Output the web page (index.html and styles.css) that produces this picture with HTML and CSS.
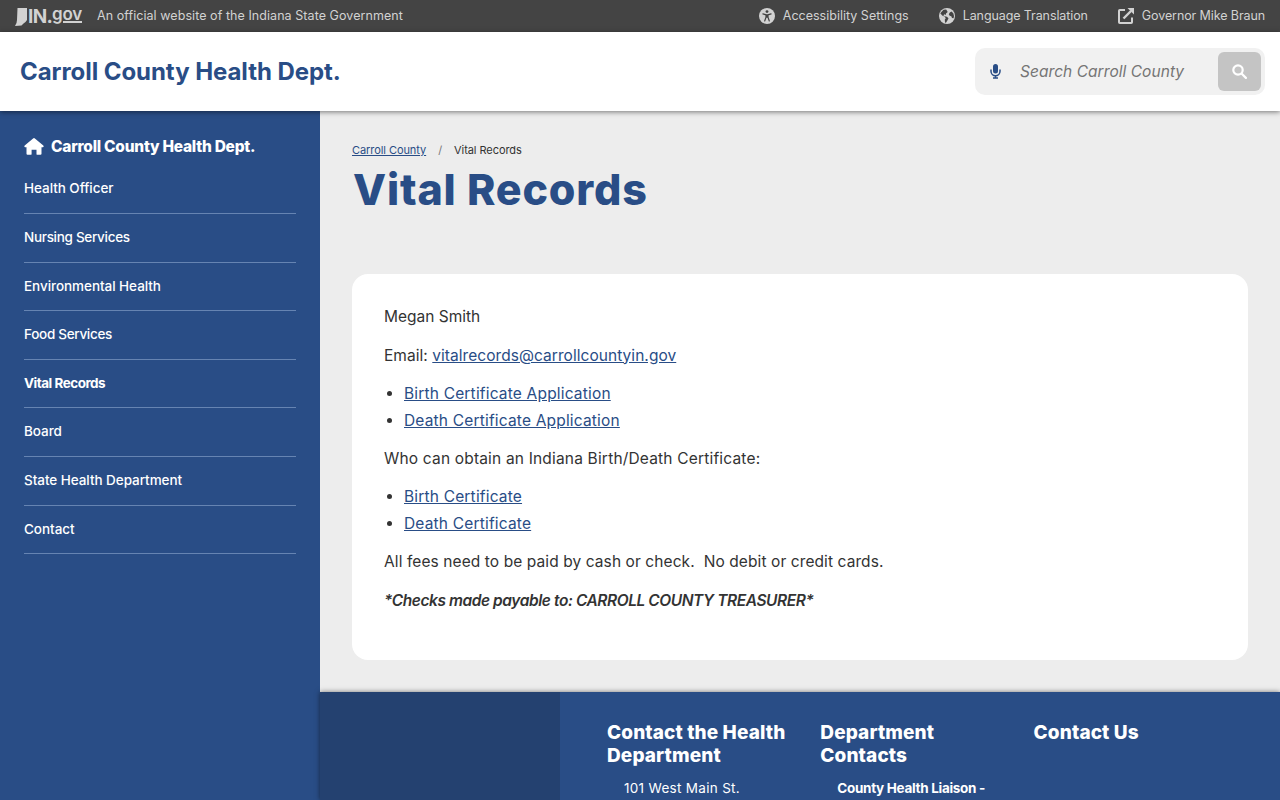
FILE: index.html
```html
<!DOCTYPE html>
<html lang="en">
<head>
    <meta charset="utf-8">
    <title>Carroll County Health Dept.: Vital Records</title>
    <link rel="stylesheet" href="styles.css">
</head>
<body>

<!-- State bar -->
<div class="state-bar">
    <a class="in-logo" href="#">
        <svg width="12" height="18" viewBox="0 0 12 18"><path d="M2.5 0H12v12l-1.5 2-2 1.5-2 2L0 18l1.5-3L2 12z" fill="currentColor"/></svg>
        <span class="in-text">IN.<span class="in-gov">g<span class="in-line">ov</span></span></span>
    </a>
    <span class="official">An official website of the Indiana State Government</span>
    <div class="state-links">
        <a class="access" href="#">
            <svg width="16" height="16" viewBox="0 0 16 16"><circle cx="8" cy="8" r="8" fill="currentColor"/><circle cx="8" cy="3.6" r="1.4" fill="#444"/><path d="M3.9 5.9L7 6.8v2.4L5.7 13M12.1 5.9L9 6.8v2.4l1.3 3.8M7 6.8h2M7 9.2h2M8 7v2" fill="none" stroke="#444" stroke-width="1.2" stroke-linecap="round"/></svg>
            <span>Accessibility Settings</span>
        </a>
        <a class="lang" href="#">
            <svg width="16" height="16" viewBox="0 0 16 16"><circle cx="8" cy="8" r="8" fill="currentColor"/><path d="M1.3 5.2L3.2 7.6l2.7 1.1.8 1.7-.9 1.2.2 2.6.8.9 1.6-2.7 1.1-2.2-1.6-1.5-2.4-.5-1.2-.9 1.2-1 1.3.6.2-1.4 1.7-1.6L7.2 1.6 4.5 1.8zM10.8 4.6l1.7-1.1 1.8 1.7.7 2.8-.4 2.3-1.6-.3-.7-1.8-1.6-.5-.9-1.5z" fill="#444"/></svg>
            <span>Language Translation</span>
        </a>
        <a class="gov" href="#">
            <svg width="16" height="16" viewBox="0 0 16 16" fill="none" stroke="currentColor" stroke-width="2"><path d="M7 2H1.8Q1 2 1 2.8v11.4q0 .8.8.8h11.4q.8 0 .8-.8V9.5"/><path d="M5.5 10.5L13 3" stroke-width="2.4"/><path d="M9.5 0H16v6.5z" fill="currentColor" stroke="none"/></svg>
            <span>Governor Mike Braun</span>
        </a>
    </div>
</div>

<!-- Site header -->
<header class="site-header">
    <a class="site-name" href="#">Carroll County Health Dept.</a>
    <form class="search">
        <svg class="mic" width="11" height="15" viewBox="0 0 11 15"><rect x="3" y="0" width="5" height="9.5" rx="2.5" fill="currentColor"/><path d="M1 5.5v1.8a4.5 4.5 0 0 0 9 0V5.5M5.5 11.8V14M3 14h5" fill="none" stroke="currentColor" stroke-width="1.5"/></svg>
        <input type="text" placeholder="Search Carroll County">
        <button type="button" aria-label="Search">
            <svg width="15" height="15" viewBox="0 0 15 15" fill="none" stroke="#fff" stroke-width="2.2"><circle cx="6" cy="6" r="4.7"/><path d="M9.5 9.5l4.4 4.4" stroke-linecap="round"/></svg>
        </button>
    </form>
</header>

<div class="page">
    <nav class="sidebar">
        <a class="side-title" href="#">
            <svg width="20" height="17" viewBox="0 0 20 17"><path d="M9.1.4q.9-.7 1.8 0l8.4 7.1q.9 1.3-.5 1.7h-1.3v6.6q0 1-1 1h-3.2q-.8 0-.8-.9v-4.1H7.6v4.1q0 .9-.9.9H3.5q-1 0-1-1V9.2H1.2Q-.2 8.8.7 7.5z" fill="#fff"/></svg>
            <span>Carroll County Health Dept.</span>
        </a>
        <ul class="side-menu">
            <li><a href="#">Health Officer</a></li>
            <li class="tight"><a href="#">Nursing Services</a></li>
            <li><a href="#">Environmental Health</a></li>
            <li class="tight"><a href="#">Food Services</a></li>
            <li class="active"><a href="#">Vital Records</a></li>
            <li><a href="#">Board</a></li>
            <li><a href="#">State Health Department</a></li>
            <li><a href="#">Contact</a></li>
        </ul>
    </nav>

    <div class="content">
        <main>
            <div class="breadcrumb"><a href="#">Carroll County</a><span class="sep">/</span><span>Vital Records</span></div>
            <h1>Vital Records</h1>

            <div class="card">
                <p class="name">Megan Smith</p>
                <p class="email">Email: <a href="#">vitalrecords@carrollcountyin.gov</a></p>
                <ul>
                    <li><a href="#">Birth Certificate Application</a></li>
                    <li><a href="#">Death Certificate Application</a></li>
                </ul>
                <p>Who can obtain an Indiana Birth/Death Certificate:</p>
                <ul>
                    <li><a href="#">Birth Certificate</a></li>
                    <li><a href="#">Death Certificate</a></li>
                </ul>
                <p class="fees">All fees need to be paid by cash or check.&nbsp; No debit or credit cards.</p>
                <p class="checks"><strong><em>*Checks made payable to: CARROLL COUNTY TREASURER*</em></strong></p>
            </div>
        </main>

        <footer>
            <div class="footer-side"></div>
            <div class="footer-cols">
                <section>
                    <h2>Contact the Health<br>Department</h2>
                    <p>101 West Main St.</p>
                </section>
                <section>
                    <h2>Department<br>Contacts</h2>
                    <p><strong>County Health Liaison -</strong></p>
                </section>
                <section>
                    <h2>Contact Us</h2>
                </section>
            </div>
        </footer>
    </div>
</div>

</body>
</html>
```

FILE: styles.css
```css
* {
    box-sizing: border-box;
}

body {
    margin: 0;
    height: 800px;
    overflow: hidden;
    display: flex;
    flex-direction: column;
    font-family: Inter, "Liberation Sans", sans-serif;
    font-size: 15.5px;
    color: #333;
    background: #ededed;
}

a {
    color: #294d86;
}

svg {
    display: block;
    flex: none;
}

/* State bar */
.state-bar {
    flex: none;
    height: 32px;
    display: flex;
    align-items: center;
    padding: 0 15px 1px;
    background: #444;
    color: #d2d2d2;
    font-size: 12.5px;
    white-space: nowrap;
}

.state-bar a {
    display: flex;
    align-items: center;
    color: inherit;
    text-decoration: none;
}

.state-bar .in-logo {
    width: 82px;
    padding-top: 2px;
}

.in-text {
    display: flex;
    align-items: flex-start;
    font-size: 19px;
    line-height: 15px;
    font-weight: 700;
    letter-spacing: -0.7px;
    margin-left: 1px;
}

.in-gov {
    display: flex;
    font-size: 17px;
    line-height: 10px;
    font-weight: 600;
    letter-spacing: -0.2px;
}

.in-line {
    height: 14px;
    border-bottom: 2px solid;
}

.official {
    letter-spacing: 0.06px;
}

.state-links {
    margin-left: auto;
    display: flex;
    gap: 30px;
}

.state-links svg {
    margin-right: 8px;
}

.lang,
.gov {
    letter-spacing: -0.1px;
}

/* Header */
.site-header {
    flex: none;
    position: relative;
    z-index: 2;
    height: 79px;
    display: flex;
    align-items: center;
    justify-content: space-between;
    padding: 0 15px 0 20px;
    background: #fff;
    box-shadow: 0 1px 5px rgba(0, 0, 0, 0.5);
}

.site-name {
    font-size: 24px;
    font-weight: 700;
    letter-spacing: -0.06px;
    text-decoration: none;
}

.search {
    width: 290px;
    height: 47px;
    display: flex;
    align-items: center;
    padding: 4px 4px 4px 15px;
    background: #f1f1f1;
    border-radius: 10px;
}

.mic {
    color: #294d86;
}

.search input {
    flex: 1;
    min-width: 0;
    margin-left: 19px;
    padding: 0;
    border: 0;
    background: none;
    font: italic 15.5px Inter, sans-serif;
    letter-spacing: 0.05px;
}

.search input::placeholder {
    color: #757575;
}

.search button {
    width: 43px;
    height: 39px;
    display: flex;
    align-items: center;
    justify-content: center;
    padding: 0;
    border: 0;
    border-radius: 6px;
    background: #c4c4c4;
}

.page {
    flex: 1;
    display: flex;
    min-height: 0;
}

/* Sidebar */
.sidebar {
    flex: none;
    width: 320px;
    padding: 23px 24px;
    background: #294d86;
}

.sidebar a {
    color: #fff;
    text-decoration: none;
    white-space: nowrap;
}

.side-title {
    height: 24px;
    display: flex;
    align-items: center;
    gap: 7px;
    font-size: 15.5px;
    font-weight: 800;
    letter-spacing: -0.25px;
}

.side-menu {
    list-style: none;
    margin: 7.4px 0 0;
    padding: 0;
}

.side-menu li {
    padding: 12px 0;
    border-bottom: 1px solid #6684b2;
    font-size: 13.5px;
    line-height: 23.6px;
    font-weight: 500;
    letter-spacing: -0.05px;
}

.side-menu .tight {
    letter-spacing: -0.3px;
}

.side-menu .active {
    font-weight: 700;
    letter-spacing: -0.5px;
}

/* Main column */
.content {
    flex: 1;
    min-width: 0;
    display: flex;
    flex-direction: column;
}

main {
    flex: none;
    height: 581px;
    padding: 29px 32px 0;
}

.breadcrumb {
    font-size: 11px;
    line-height: 20px;
    letter-spacing: -0.07px;
}

.breadcrumb .sep {
    margin: 0 12px;
    color: #777;
}

h1 {
    margin: 2px 0 57px 1px;
    font-size: 43px;
    line-height: 55px;
    font-weight: 800;
    letter-spacing: 0.85px;
    color: #294d86;
}

.card {
    height: 386px;
    padding: 29.4px 32px;
    background: #fff;
    border-radius: 16px;
    line-height: 27px;
    letter-spacing: 0.18px;
}

.card p,
.card ul {
    margin: 0 0 11.2px;
}

.card ul {
    padding-left: 20px;
}

.card .name {
    letter-spacing: 0;
}

.card .email {
    letter-spacing: 0.05px;
}

.card .fees {
    letter-spacing: 0.09px;
}

.card .checks {
    letter-spacing: -0.43px;
}

.checks strong {
    font-weight: 600;
}

/* Footer */
footer {
    flex: 1;
    display: flex;
    background: #294d86;
    color: #fff;
    box-shadow: 0 0 5px rgba(0, 0, 0, 0.5);
}

.footer-side {
    width: 240px;
    background: #244170;
}

.footer-cols {
    flex: 1;
    display: flex;
    padding: 29px 32px 0 47px;
}

.footer-cols section {
    width: 213.3px;
    white-space: nowrap;
}

.footer-cols h2 {
    margin: 0 0 9px;
    font-size: 19px;
    line-height: 23px;
    font-weight: 800;
    letter-spacing: 0.12px;
}

.footer-cols p {
    margin: 0 0 0 17px;
    font-size: 13.5px;
    line-height: 24px;
    letter-spacing: 0.3px;
}

.footer-cols p strong {
    letter-spacing: -0.3px;
}
```
